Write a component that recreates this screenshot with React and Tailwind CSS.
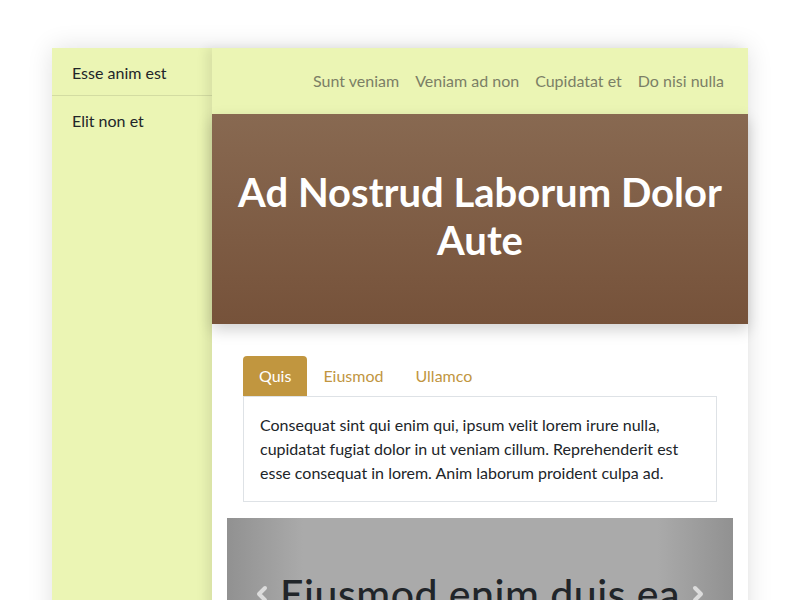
import { useState } from "react";
import { ChevronLeft, ChevronRight } from "lucide-react";

const navLinks = ["Sunt veniam", "Veniam ad non", "Cupidatat et", "Do nisi nulla"];
const sideLinks = ["Esse anim est", "Elit non et"];
const tabs = ["Quis", "Eiusmod", "Ullamco"];

function App() {
  const [active, setActive] = useState(0);

  return (
    <div className="min-h-screen bg-white pt-12 font-['Segoe_UI','Lato',sans-serif] text-[#212529]">
      <div className="mx-auto flex w-[696px] shadow-[0_0_24px_rgba(0,0,0,0.12)]">
        {/* sidebar */}
        <aside className="w-[160px] shrink-0 bg-[#ebf5b4] min-h-[552px]">
          {sideLinks.map((l) => (
            <div key={l} className="h-12 flex items-center px-5 pt-0.5 border-b border-[#d3dca2] last:border-b-0">
              {l}
            </div>
          ))}
        </aside>

        {/* main */}
        <main className="flex-1 relative z-10 bg-white shadow-[-6px_0_10px_rgba(0,0,0,0.08)]">
          <nav className="h-[66px] bg-[#ebf5b4] flex items-center justify-end pr-4">
            {navLinks.map((l) => (
              <a key={l} className="px-2 text-[#7b7f66]">{l}</a>
            ))}
          </nav>

          <header className="h-[210px] flex items-center justify-center px-3 pb-1.5 bg-gradient-to-b from-[#886951] to-[#76523a] shadow-[0_6px_14px_rgba(0,0,0,0.18)]">
            <h1 className="text-center text-white text-[40px] leading-[48px] font-bold">
              Ad Nostrud Laborum Dolor Aute
            </h1>
          </header>

          <div className="px-[15px] pt-8">
            <div className="px-4">
              <div className="flex">
                {tabs.map((t, i) => (
                  <button
                    key={t}
                    onClick={() => setActive(i)}
                    className={
                      i === active
                        ? "h-10 px-4 rounded-t bg-[#c1963f] text-white"
                        : "h-10 px-4 text-[#c1963f]"
                    }
                  >
                    {t}
                  </button>
                ))}
              </div>
              <div className="border border-[#dee2e6] p-4 leading-6">
                Consequat sint qui enim qui, ipsum velit lorem irure nulla, cupidatat fugiat dolor in ut veniam cillum. Reprehenderit est esse consequat in lorem. Anim laborum proident culpa ad.
              </div>
            </div>

            <div className="mt-4 h-[160px] pt-[52px] flex justify-center bg-[linear-gradient(to_right,#919191,#aaaaaa_15%,#aaaaaa_85%,#919191)]">
              <div className="flex items-center gap-1.5 h-12">
                <ChevronLeft size={24} strokeWidth={4} className="text-[#dcdcdc]" />
                <h2 className="text-[41px] leading-[48px] font-medium tracking-[0.5px] text-[#212529]">Eiusmod enim duis ea</h2>
                <ChevronRight size={24} strokeWidth={4} className="text-[#dcdcdc]" />
              </div>
            </div>
          </div>
        </main>
      </div>
    </div>
  );
}

export default App;
